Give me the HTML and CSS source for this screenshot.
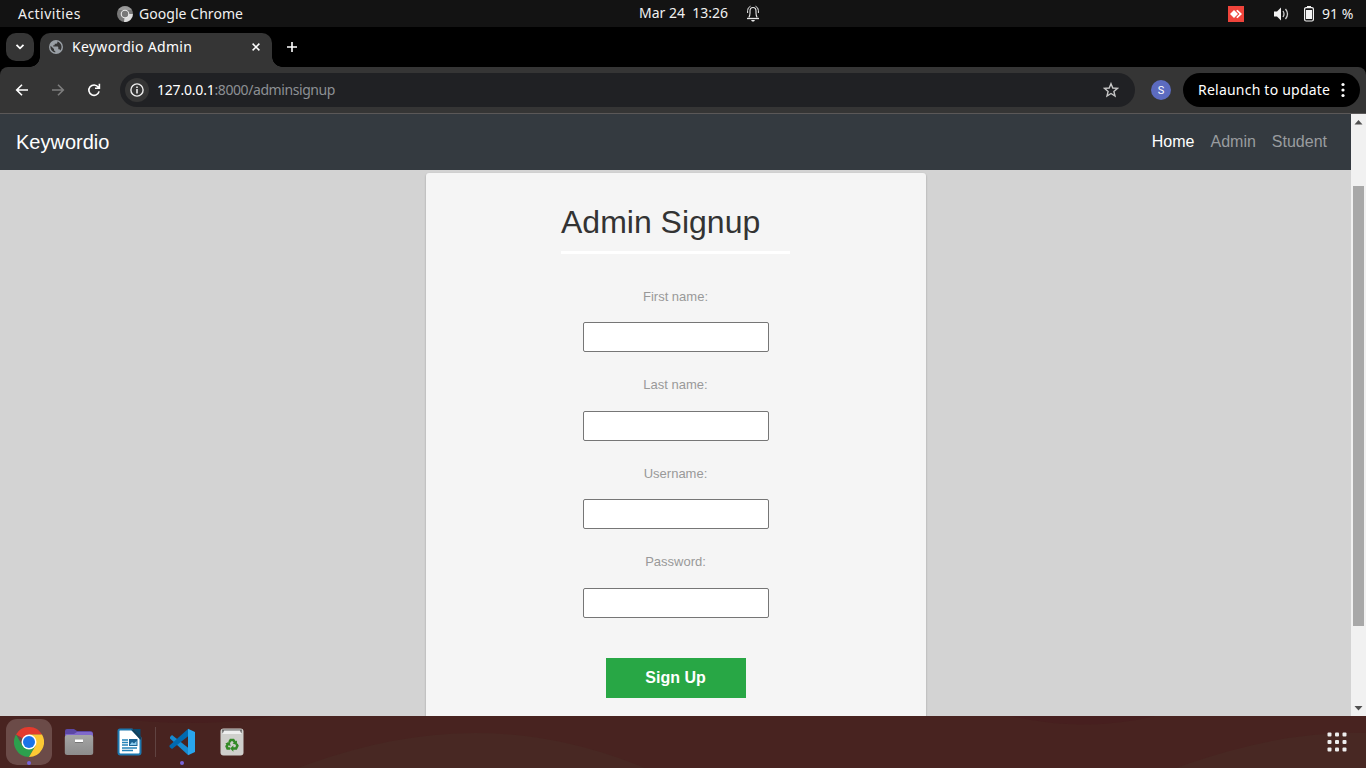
FILE: index.html
```html
<!DOCTYPE html>
<html lang="en">
<head>
<meta charset="utf-8">
<title>Keywordio Admin</title>
<link rel="stylesheet" href="styles.css">
</head>
<body>
<div class="screen">
  <header class="topbar">
    <div class="top-left">
      <span class="t-activities">Activities</span>
      <svg class="app-icon" width="16" height="16" viewBox="0 0 16 16"><circle cx="8" cy="8" r="8" fill="#777"/><path d="M8 8H15.9A8 8 0 0 1 7 16Z" fill="#ddd"/><path d="M1.2 4A8 8 0 0 1 14.8 4H8Z" fill="#999"/><circle cx="8" cy="8" r="4.3" fill="#e8e8e8"/><circle cx="8" cy="8" r="3.2" fill="#777"/></svg>
      <span class="t-app">Google Chrome</span>
    </div>
    <div class="top-center">
      <span class="t-clock">Mar 24&nbsp; 13:26</span>
      <svg class="bell" width="14" height="17" viewBox="0 0 14 17" fill="none" stroke="#e8e8e8"><path d="M2.800 12.500Q4 11 4 8V6Q4 2.500 7 2.500T10 6V8Q10 11 11.200 12.500" stroke-width="1.100"/><path d="M1 13.500H13" stroke-width="1.300"/><path d="M1.600 8V5.500Q1.600 2.500 4.500 1.200M12.400 8V5.500Q12.400 2.500 9.500 1.200"/><path d="M5 15H9L8 16.500H6Z" fill="#e8e8e8" stroke="none"/></svg>
    </div>
    <div class="top-right">
      <svg class="anydesk" width="16" height="16" viewBox="0 0 16 16"><path fill="#ef443b" d="M0 0H16V16H0Z"/><path fill="#fff" d="M2 8L6 4L10 8L6 12ZM8.200 4.800L9.500 3.800L14 8L9.500 12.200L8.200 11.200L11.500 8Z"/></svg>
      <svg class="speaker" width="15" height="14" viewBox="0 0 15 14"><path fill="#f2f2f2" d="M0 4.500H3L7 .5V13.500L3 9.500H0Z"/><path d="M9 4Q11 7 9 10M11.500 2Q15.500 7 11.500 12" fill="none" stroke="#ccc" stroke-width="1.300"/></svg>
      <svg class="battery" width="10" height="16" viewBox="0 0 10 16"><path fill="#f2f2f2" d="M3 0H7V2H3ZM2 4H8V13H2Z"/><rect x=".6" y="1.600" width="8.800" height="13.400" rx="1.500" fill="none" stroke="#f2f2f2" stroke-width="1.200"/></svg>
      <span class="t-battery">91 %</span>
    </div>
  </header>

  <div class="tabstrip">
    <div class="tab-search"><svg width="10" height="6" viewBox="0 0 10 6"><path d="M1.500 .8L5 4.300L8.500 .8" fill="none" stroke="#fff" stroke-width="1.800"/></svg></div>
    <div class="tab">
      <svg width="14" height="14" viewBox="0 0 14 14"><circle cx="7" cy="7" r="7" fill="#9aa0a6"/><path d="M8.400 1.600V2.500Q8.400 3.800 7 3.800H5.700V5.200H4.300V6.600H8.500Q9.300 6.600 9.300 7.500V9.300H10Q11 9.300 11.300 10.500A5.600 5.600 0 0 0 8.400 1.600ZM6.300 12.600V11.200Q5 11.200 5 9.800V9.100L1.600 5.800A5.600 5.600 0 0 0 6.300 12.600Z" fill="#353535"/></svg>
      <span class="t-tab">Keywordio Admin</span>
      <svg class="tab-close" width="8" height="8" viewBox="0 0 8 8"><path d="M.6 .6L7.400 7.400M7.400 .6L.6 7.400" stroke="#fff" stroke-width="1.500"/></svg>
    </div>
    <svg class="new-tab" width="10" height="10" viewBox="0 0 10 10"><path d="M5 0V10M0 5H10" stroke="#fff" stroke-width="1.600"/></svg>
  </div>

  <div class="toolbar">
    <svg class="nav-icon" width="14" height="14" viewBox="0 0 14 14"><path d="M13 7H2M7 1.700L1.700 7L7 12.300" fill="none" stroke="#fff" stroke-width="1.600"/></svg>
    <svg class="nav-icon forward" width="14" height="14" viewBox="0 0 14 14"><path d="M1 7H12M7 1.700L12.300 7L7 12.300" fill="none" stroke="#7d7d7d" stroke-width="1.600"/></svg>
    <svg class="nav-icon reload" width="14" height="14" viewBox="0 0 14 14"><path d="M12.100 8.400A5.200 5.200 0 1 1 11.200 4L12.300 5M12.400 .8V5.200H8" fill="none" stroke="#fff" stroke-width="1.600"/></svg>
    <div class="omnibox">
      <div class="site-info"><svg width="14" height="14" viewBox="0 0 14 14"><circle cx="7" cy="7" r="6.100" fill="none" stroke="#eee" stroke-width="1.400"/><path d="M6.200 6H7.800V10.500H6.200ZM6.200 3.400H7.800V5H6.200Z" fill="#eee"/></svg></div>
      <span class="t-url"><span class="host">127.0.0.1</span>:8000/adminsignup</span>
      <svg class="star" width="16" height="16" viewBox="0 0 16 16"><path d="M8 1.700L9.800 6L14.500 6.400L10.900 9.400L12 14L8 11.500L4 14L5.100 9.400L1.500 6.400L6.200 6Z" fill="none" stroke="#c7c7c7" stroke-width="1.400"/></svg>
    </div>
    <div class="avatar">S</div>
    <div class="relaunch"><span class="t-relaunch">Relaunch to update</span><svg width="4" height="16" viewBox="0 0 4 16" fill="#fff"><circle cx="2" cy="2.500" r="1.600"/><circle cx="2" cy="8" r="1.600"/><circle cx="2" cy="13.500" r="1.600"/></svg></div>
  </div>

  <div class="viewport">
    <div class="page">
      <nav class="navbar">
        <span class="brand">Keywordio</span>
        <div class="nav-links"><span class="active">Home</span><span>Admin</span><span>Student</span></div>
      </nav>
      <main class="content">
        <form class="card">
          <h1>Admin Signup</h1>
          <label for="first">First name:</label><input id="first" type="text">
          <label for="last">Last name:</label><input id="last" type="text">
          <label for="user">Username:</label><input id="user" type="text">
          <label for="pass">Password:</label><input id="pass" type="password">
          <button type="button">Sign Up</button>
        </form>
      </main>
    </div>
    <div class="scrollbar">
      <svg width="9" height="5" viewBox="0 0 9 5"><path d="M4.500 0L8.500 4.500H.5Z" fill="#505050"/></svg>
      <div class="thumb"></div>
      <svg class="arrow-down" width="9" height="5" viewBox="0 0 9 5"><path d="M4.500 4.500L8.500 0H.5Z" fill="#505050"/></svg>
    </div>
  </div>

  <footer class="dock">
    <svg class="dock-bg" width="1366" height="52" viewBox="0 0 1366 52"><path d="M298 52Q390 17 475 17T645 52ZM1176 52Q1280 14 1366 17V52Z" fill="#482823"/><path d="M100 0Q190 14 275 0ZM1010 0Q1085 17 1155 0Z" fill="#471f1f"/></svg>
    <div class="dock-item selected">
      <svg width="30" height="30" viewBox="0 0 30 30"><path d="M15 15L2 7.500A15 15 0 0 1 28 7.500H15Z" fill="#e33b2e"/><path d="M2 7.500L8.500 18.800L15 22.500L21.500 18.700L15 30A15 15 0 0 1 2 7.500Z" fill="#2da04d"/><path d="M15 7.500H28A15 15 0 0 1 15 30L21.500 18.700Z" fill="#fcc934"/><circle cx="15" cy="15" r="7.500" fill="#fff"/><circle cx="15" cy="15" r="6" fill="#1a73e8"/></svg>
      <i class="dot"></i>
    </div>
    <svg class="files" width="30" height="28" viewBox="0 0 30 28"><defs><linearGradient id="fg" x2="0" y2="1"><stop stop-color="#a5a5a5"/><stop offset="1" stop-color="#8c8c8c"/></linearGradient></defs><path d="M1 9V3Q1 1 3 1H10L13 3H26Q29 3 29 6V12H1Z" fill="#5c47a5"/><path d="M1.500 6H10L13 4H27Q29 4 29 7V12H1Z" fill="#8069cb"/><rect x=".8" y="7" width="28.400" height="20" rx="2.500" fill="url(#fg)"/><path d="M11 11.500H19V14H11Z" fill="#fff"/><path d="M11 14H19V15H11Z" fill="#777"/></svg>
    <svg class="writer" width="26" height="28" viewBox="0 0 26 28"><path d="M3 1.500H15L23.500 10V24.500Q23.500 26.500 21.500 26.500H3.500Q1.500 26.500 1.500 24.500V3Q1.500 1.500 3 1.500Z" fill="#fff" stroke="#1c78b0" stroke-width="2"/><path d="M16 1H23.500V8.500Z" fill="#0b4a6e"/><path d="M14 1.500H16.500L24 9V11.500H23Z" fill="#103f5a"/><path d="M5 12H11M5 14.500H11M5 17H11M5 20H20M5 22.500H16" stroke="#2483b8" stroke-width="1.300"/><path d="M12 11H20.500V18H12Z" fill="#1a6293"/><path d="M13 16.500L15 14L17 15.500L19.500 13V17H13Z" fill="#8ccbec"/></svg>
    <i class="sep"></i>
    <div class="code-item">
      <svg width="28" height="28" viewBox="0 0 28 28"><path d="M20 27L2 10.500V9L4 7L21 20.500Z" fill="#168bd1"/><path d="M20 1L1.500 17.500V19L4 21L21 7.500Z" fill="#0069b0"/><path d="M20 .8L27 4V24L20 27.200V7Z" fill="#29a5ed"/></svg>
      <i class="dot"></i>
    </div>
    <svg class="trash" width="24" height="28" viewBox="0 0 24 28"><rect x=".5" y=".5" width="23" height="27" rx="3" fill="#cfcfcc"/><path d="M2 1.500H22L21.500 5H2.500Z" fill="#666"/><path d="M4 2.500H20L21.500 6H2.500Z" fill="#eee"/><g transform="translate(1.200 1.600) scale(.9)"><g fill="none" stroke="#338a26" stroke-width="2.800"><path d="M9 14L10.500 11.500H13.500L15.500 14.500M17 16L18 18L16.500 21H12.500M10 21H7L6 18.500L8 15"/></g><path d="M17.500 12V17L12.500 15.500ZM13.500 17.500V24.500L10 21ZM4.500 15.500L9.500 13.500L10.500 18.500Z" fill="#338a26"/></g></svg>
    <svg class="apps" width="20" height="20" viewBox="0 0 20 20" fill="#eee"><rect x=".5" y=".5" width="4" height="4" rx="1"/><rect x="8" y=".5" width="4" height="4" rx="1"/><rect x="15.500" y=".5" width="4" height="4" rx="1"/><rect x=".5" y="8" width="4" height="4" rx="1"/><rect x="8" y="8" width="4" height="4" rx="1"/><rect x="15.500" y="8" width="4" height="4" rx="1"/><rect x=".5" y="15.500" width="4" height="4" rx="1"/><rect x="8" y="15.500" width="4" height="4" rx="1"/><rect x="15.500" y="15.500" width="4" height="4" rx="1"/></svg>
  </footer>
</div>
</body>
</html>
```
FILE: styles.css
```css
* { box-sizing: border-box; }
body { margin: 0; font-family: "Noto Sans", sans-serif; overflow: hidden; }
svg { display: block; flex: none; }
.screen { width: 1366px; height: 768px; display: flex; flex-direction: column; background: #000; color: #fff; overflow: hidden; }
.topbar { height: 27px; flex: none; background: #131313; display: grid; grid-template-columns: 639px 1fr auto; align-items: center; font-size: 14px; color: #f0f0f0; white-space: nowrap; }
.top-left, .top-center, .top-right { display: flex; align-items: center; height: 26px; }
.top-left { padding-left: 18px; }
.t-activities { width: 63px; letter-spacing: 0.45px; }
.app-icon { margin: 0 6px 0 36px; }
.t-app { letter-spacing: 0.05px; }
.t-clock { width: 89px; margin-right: 18px; padding-bottom: 2px; }
.bell { margin-bottom: 1px; }
.top-right { padding-right: 13px; }
.anydesk { margin-right: 30px; }
.speaker { margin-right: 15px; }
.battery { margin-right: 8px; }
.t-battery { width: 31px; }

.tabstrip { height: 40px; flex: none; display: flex; padding: 6px 6px 0; }
.tab-search { width: 28px; height: 28px; border-radius: 10px; background: #353535; display: flex; align-items: center; justify-content: center; }
.tab { position: relative; width: 232px; height: 34px; margin-left: 6px; border-radius: 10px 10px 0 0; background: #353535; display: flex; align-items: center; padding: 0 12px 6px 9px; font-size: 14px; white-space: nowrap; }
.tab::before, .tab::after { content: ""; position: absolute; bottom: 0; width: 10px; height: 10px; }
.tab::before { left: -10px; background: radial-gradient(circle at 0 0, transparent 9.5px, #353535 10px); }
.tab::after { right: -10px; background: radial-gradient(circle at 100% 0, transparent 9.5px, #353535 10px); }
.t-tab { margin-left: 9px; padding-bottom: 2px; letter-spacing: 0.3px; }
.tab-close { margin-left: auto; }
.new-tab { margin: 9px 0 0 15px; }

.toolbar { height: 47px; flex: none; background: #353535; border-radius: 8px 8px 0 0; border-bottom: 1px solid #5b5858; display: flex; align-items: center; padding: 0 6px 0 15px; }
.forward { margin-left: 22px; }
.reload { margin-left: 22px; }
.omnibox { width: 1015px; height: 34px; margin-left: 19px; border-radius: 17px; background: #202124; display: flex; align-items: center; padding: 0 16px 0 5px; }
.site-info { width: 24px; height: 24px; border-radius: 50%; background: #353535; display: flex; align-items: center; justify-content: center; }
.t-url { margin-left: 8px; padding-bottom: 2px; font-size: 14px; letter-spacing: -0.42px; color: #8d9094; white-space: nowrap; }
.host { color: #fff; letter-spacing: -0.2px; }
.star { margin-left: auto; }
.avatar { width: 20px; height: 20px; margin-left: 16px; border-radius: 50%; background: #5c6bc0; font: 11px/21px Roboto, sans-serif; text-align: center; }
.relaunch { width: 177px; height: 34px; margin-left: 12px; border-radius: 17px; background: #000; display: flex; align-items: center; justify-content: space-between; padding: 0 15px; font-size: 14px; white-space: nowrap; }
.t-relaunch { padding-bottom: 2px; letter-spacing: 0.22px; }

.viewport { height: 602px; flex: none; display: flex; font-family: "Liberation Sans", sans-serif; }
.page { width: 1351px; background: #d3d3d3; display: flex; flex-direction: column; overflow: hidden; }
.navbar { height: 56px; flex: none; background: #343a40; display: flex; align-items: center; justify-content: space-between; padding: 0 24px 0 16px; }
.brand { font-size: 20px; }
.nav-links { display: flex; gap: 16px; font-size: 16px; line-height: 24px; color: #999c9f; }
.nav-links .active { color: #fff; }
.content { display: flex; justify-content: center; padding-top: 3px; }
.card { width: 500px; height: 620px; flex: none; background: #f5f5f5; border-radius: 3px; box-shadow: 0 1px 2px rgba(0,0,0,.3); display: flex; flex-direction: column; align-items: center; }
h1 { width: 229px; height: 51px; margin: 30px 0 32.7px; border-bottom: 3px solid #fff; font-size: 32px; line-height: 38px; font-weight: 400; color: #333; white-space: nowrap; }
label { height: 20.5px; font-size: 13px; line-height: 20px; color: #999; }
input { width: 186px; height: 30px; margin: 15px 0 23px; border: 1px solid #767676; border-radius: 2px; background: #fff; }
button { width: 140px; height: 40px; margin-top: 17.3px; padding: 0; border: 0; background: #28a745; color: #fff; font: 700 16px "Liberation Sans", sans-serif; }
.scrollbar { width: 15px; background: #f1f1f1; display: flex; flex-direction: column; align-items: center; padding: 6px 0 5px; }
.thumb { width: 11px; height: 440px; margin: 61px 0 auto; background: #a8a8a8; }

.dock { position: relative; height: 52px; flex: none; background: #482320; display: flex; align-items: center; padding-left: 6px; }
.dock-bg { position: absolute; inset: 0; }
.dock > :not(.dock-bg) { position: relative; }
.dock-item { width: 46px; height: 46px; border-radius: 11px; background: #6b4b48; display: flex; align-items: center; justify-content: center; }
.dot { position: absolute; bottom: 0; left: calc(50% - 2px); width: 4px; height: 4px; border-radius: 50%; background: #7764d8; }
.files { margin-left: 12px; }
.writer { margin-left: 23px; }
.sep { width: 1px; height: 30px; margin-left: 12px; background: #604341; }
.code-item { height: 46px; margin-left: 12px; display: flex; align-items: center; }
.trash { margin-left: 24px; }
.apps { margin-left: auto; margin-right: 19px; }
```
